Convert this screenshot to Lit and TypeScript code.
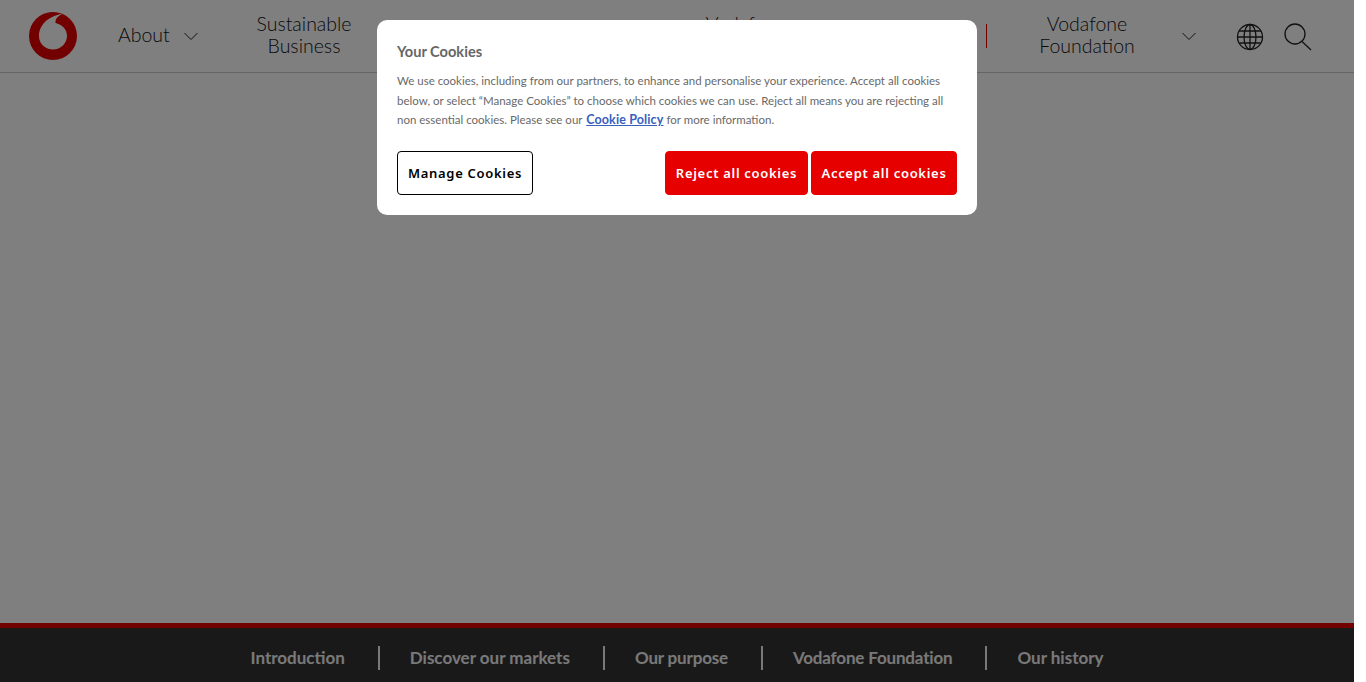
import { LitElement, html, css } from "lit";
import { customElement } from "lit/decorators.js";

@customElement("app-root")
export class AppRoot extends LitElement {
  static styles = css`
    :host { display: block; width: 1366px; height: 682px; overflow: hidden; position: relative; background: #fff; font-family: Lato, "Noto Sans", sans-serif; }
    .page { width: 1354px; height: 682px; display: flex; flex-direction: column; background: #fff; position: relative; overflow: hidden; }
    .header { height: 72px; flex: none; border-bottom: 1px solid #ccc; display: flex; align-items: center; position: relative; }
    .logo { width: 48px; height: 48px; margin-left: 29px; flex: none; }
    .nav { font-weight: 300; font-size: 19.500px; line-height: 22px; color: #111; text-align: center; margin-top: -3px; }
    .about { margin-left: 41px; width: 51px; }
    .chev { flex: none; }
    .c1 { margin-left: 15px; }
    .sust { margin-left: 58px; width: 96px; }
    .vod { position: absolute; left: 701px; top: 16px; width: 90px; }
    .rule { position: absolute; left: 986px; top: 24px; width: 1px; height: 24px; background: #e60000; }
    .found { position: absolute; left: 1030px; top: 16px; width: 114px; }
    .c2 { position: absolute; left: 1182px; top: 32px; }
    .globe { position: absolute; left: 1236px; top: 23px; }
    .search { position: absolute; left: 1283px; top: 23px; }
    .main { height: 550px; flex: none; }
    .footer { height: 60px; flex: none; background: #333; border-top: 5px solid #e60000; display: flex; align-items: center; justify-content: center; font-weight: 700; font-size: 17px; color: #f2f2f2; }
    .footer span { padding: 0 33px 0 30px; line-height: 24px; border-left: 2px solid #f2f2f2; }
    .footer span:first-child { border-left: 0; padding-left: 33px; }
    .footer .tight { letter-spacing: -.17px; }
    .overlay { position: absolute; inset: 0; background: rgba(0,0,0,.5); }
    .dialog { position: absolute; left: 377px; top: 20px; width: 600px; height: 195px; box-sizing: border-box; background: #fff; border-radius: 10px; padding: 20px; display: flex; flex-direction: column; }
    h2 { margin: 0; font-size: 14.600px; line-height: 24px; font-weight: 700; color: #666; }
    p { margin: 7px 0 0; font-size: 11.500px; line-height: 19.500px; color: #696969; white-space: nowrap; }
    a { color: #3860be; font-weight: 700; font-size: 12.500px; letter-spacing: .13px; margin-left: 1px; text-decoration: underline; }
    .btns { margin-top: 21px; display: flex; gap: 3px; }
    button { font-family: "Noto Sans", sans-serif; font-weight: 600; font-size: 13px; letter-spacing: .7px; height: 44px; border-radius: 4px; padding: 0; box-sizing: border-box; }
    .manage { width: 136px; background: #fff; border: 1px solid #000; color: #000; margin-right: auto; }
    .red { background: #e60000; border: 1px solid #e60000; color: #fff; }
    .reject { width: 143px; }
    .accept { width: 146px; }
  `;

  render() {
    const chev = (cls: string) => html`<svg class="chev ${cls}" width="14" height="9" viewBox="0 0 14 9"><path d="M.5 1 7 7.500 13.500 1" fill="none" stroke="#222" stroke-width="1"/></svg>`;
    return html`
      <div class="page">
        <header class="header">
          <svg class="logo" viewBox="0 0 48 48">
            <circle cx="24" cy="24" r="24" fill="#e60000"/>
            <path fill="#fff" d="M34.500 1.800C22 3 10 11.500 10 24c0 8 6.500 13.500 14 13.500 8 0 14-6.500 14-13.500 0-7-5-11.500-11.500-13-.5-4 3-8 8-9.200Z"/>
          </svg>
          <div class="nav about">About</div>
          ${chev("c1")}
          <div class="nav sust">Sustainable Business</div>
          <div class="nav vod">Vodafone Spark</div>
          <div class="rule"></div>
          <div class="nav found">Vodafone Foundation</div>
          ${chev("c2")}
          <svg class="globe" width="28" height="28" viewBox="0 0 28 28" fill="none" stroke="#222" stroke-width="1.300">
            <circle cx="14" cy="14" r="12.500"/><ellipse cx="14" cy="14" rx="6" ry="12.500"/><path d="M14 1.500v25M3.200 8h21.600M1.500 14h25M3.200 20h21.600"/>
          </svg>
          <svg class="search" width="30" height="30" viewBox="0 0 30 30" fill="none" stroke="#222" stroke-width="1.300">
            <circle cx="12" cy="11" r="10"/><path d="M19 18.500 28 27"/>
          </svg>
        </header>
        <main class="main"></main>
        <footer class="footer">
          <span>Introduction</span><span>Discover our markets</span><span class="tight">Our purpose</span><span class="tight">Vodafone Foundation</span><span>Our history</span>
        </footer>
        <div class="overlay"></div>
        <section class="dialog">
          <h2>Your Cookies</h2>
          <p>We use cookies, including from our partners, to enhance and personalise your experience. Accept all cookies<br>below, or select “Manage Cookies” to choose which cookies we can use. Reject all means you are rejecting all<br>non essential cookies. Please see our <a href="#">Cookie Policy</a> for more information.</p>
          <div class="btns">
            <button class="manage">Manage Cookies</button>
            <button class="red reject">Reject all cookies</button>
            <button class="red accept">Accept all cookies</button>
          </div>
        </section>
      </div>
    `;
  }
}
